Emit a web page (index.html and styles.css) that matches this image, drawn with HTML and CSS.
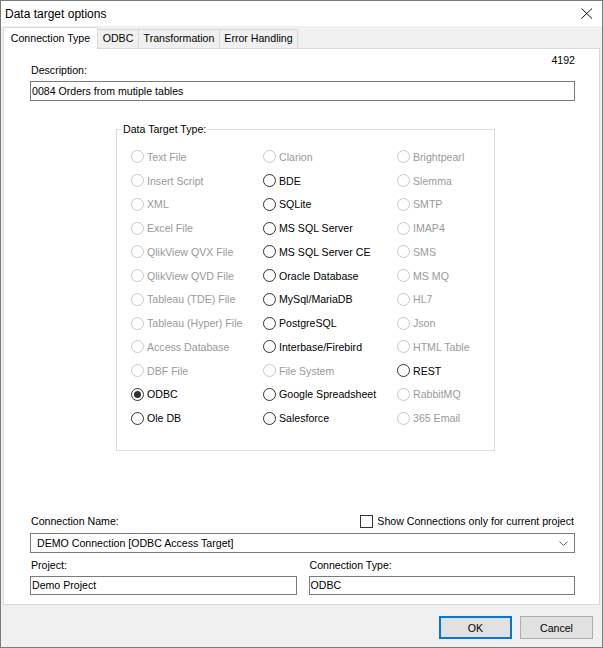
FILE: index.html
```html
<!DOCTYPE html>
<html lang="en">
  <head>
    <title>Data target options</title>
    <meta charset="utf-8">
    <link rel="stylesheet" href="styles.css">
  </head>
  <body>
    <div class="window">
      <div class="titlebar">
        <span class="title">Data target options</span>
        <svg class="close" width="12" height="11" viewBox="0 0 12 11">
          <path d="M0.5 0.5 L11 10.5 M11 0.5 L0.5 10.5" stroke="#111" stroke-width="1" fill="none"/>
        </svg>
      </div>

      <div class="tabs">
        <div class="tab active">Connection Type</div>
        <div class="tab tab-odbc">ODBC</div>
        <div class="tab tab-trans">Transformation</div>
        <div class="tab tab-err">Error Handling</div>
      </div>

      <div class="panel">
        <div class="desc-head">
          <span class="label desc-label">Description:</span>
          <span class="id-number">4192</span>
        </div>
        <div class="textbox">0084 Orders from mutiple tables</div>

        <fieldset class="group">
          <legend>Data Target Type:</legend>
          <div class="radio-grid">
            <!-- column 1 -->
            <label class="radio disabled"><span class="dot"></span>Text File</label>
            <label class="radio disabled"><span class="dot"></span>Insert Script</label>
            <label class="radio disabled"><span class="dot"></span>XML</label>
            <label class="radio disabled"><span class="dot"></span>Excel File</label>
            <label class="radio disabled"><span class="dot"></span>QlikView QVX File</label>
            <label class="radio disabled"><span class="dot"></span>QlikView QVD File</label>
            <label class="radio disabled"><span class="dot"></span>Tableau (TDE) File</label>
            <label class="radio disabled"><span class="dot"></span>Tableau (Hyper) File</label>
            <label class="radio disabled"><span class="dot"></span>Access Database</label>
            <label class="radio disabled"><span class="dot"></span>DBF File</label>
            <label class="radio checked"><span class="dot"></span>ODBC</label>
            <label class="radio"><span class="dot"></span>Ole DB</label>
            <!-- column 2 -->
            <label class="radio disabled"><span class="dot"></span>Clarion</label>
            <label class="radio"><span class="dot"></span>BDE</label>
            <label class="radio"><span class="dot"></span>SQLite</label>
            <label class="radio"><span class="dot"></span>MS SQL Server</label>
            <label class="radio"><span class="dot"></span>MS SQL Server CE</label>
            <label class="radio"><span class="dot"></span>Oracle Database</label>
            <label class="radio"><span class="dot"></span>MySql/MariaDB</label>
            <label class="radio"><span class="dot"></span>PostgreSQL</label>
            <label class="radio"><span class="dot"></span>Interbase/Firebird</label>
            <label class="radio disabled"><span class="dot"></span>File System</label>
            <label class="radio"><span class="dot"></span>Google Spreadsheet</label>
            <label class="radio"><span class="dot"></span>Salesforce</label>
            <!-- column 3 -->
            <label class="radio disabled"><span class="dot"></span>Brightpearl</label>
            <label class="radio disabled"><span class="dot"></span>Slemma</label>
            <label class="radio disabled"><span class="dot"></span>SMTP</label>
            <label class="radio disabled"><span class="dot"></span>IMAP4</label>
            <label class="radio disabled"><span class="dot"></span>SMS</label>
            <label class="radio disabled"><span class="dot"></span>MS MQ</label>
            <label class="radio disabled"><span class="dot"></span>HL7</label>
            <label class="radio disabled"><span class="dot"></span>Json</label>
            <label class="radio disabled"><span class="dot"></span>HTML Table</label>
            <label class="radio"><span class="dot"></span>REST</label>
            <label class="radio disabled"><span class="dot"></span>RabbitMQ</label>
            <label class="radio disabled"><span class="dot"></span>365 Email</label>
          </div>
        </fieldset>

        <div class="connection">
          <div class="conn-head">
            <span class="label">Connection Name:</span>
            <label class="check"><span class="box"></span>Show Connections only for current project</label>
          </div>
          <div class="combo">
            <span>DEMO Connection [ODBC Access Target]</span>
            <svg class="chevron" width="9" height="5" viewBox="0 0 9 5">
              <path d="M0.5 0.5 L4.5 4.5 L8.5 0.5" stroke="#606060" stroke-width="1" fill="none"/>
            </svg>
          </div>
          <div class="pair">
            <div class="field">
              <span class="label">Project:</span>
              <div class="textbox small">Demo Project</div>
            </div>
            <div class="field">
              <span class="label">Connection Type:</span>
              <div class="textbox small">ODBC</div>
            </div>
          </div>
        </div>
      </div>

      <div class="footer">
        <button class="btn default">OK</button>
        <button class="btn">Cancel</button>
      </div>
    </div>
  </body>
</html>
```

FILE: styles.css
```css
* {
  margin: 0;
  padding: 0;
  box-sizing: border-box;
}

body {
  font-family: "Liberation Sans", Arial, sans-serif;
  font-size: 10.6px;
  color: #000;
  background: #f0f0f0;
}

.window {
  width: 603px;
  height: 648px;
  border: 1px solid #7a7a7a;
  background: #f0f0f0;
  display: flex;
  flex-direction: column;
}

/* Title bar */
.titlebar {
  height: 25px;
  background: #fff;
  display: flex;
  align-items: center;
  justify-content: space-between;
  padding: 0 9px 0 4px;
}

.title {
  font-size: 12px;
}

/* Tabs */
.tabs {
  height: 22px;
  display: flex;
  align-items: flex-end;
  padding-left: 2px;
}

.tab {
  height: 19px;
  line-height: 17px;
  text-align: center;
  background: #f0f0f0;
  border: 1px solid #d9d9d9;
  border-bottom: none;
  margin-left: -1px;
}

.tab.active {
  height: 22px;
  width: 95px;
  line-height: 20px;
  background: #fff;
  margin-bottom: -1px;
  margin-left: 0;
  position: relative;
  z-index: 1;
}

.tab-odbc { width: 42px; }
.tab-trans { width: 82px; }
.tab-err { width: 79px; }

/* Panel */
.panel {
  flex: 1;
  margin: 0 2px;
  background: #fff;
  border: 1px solid #d9d9d9;
  display: flex;
  flex-direction: column;
  padding: 0 24px 9px 26px;
}

.desc-head {
  height: 32px;
  display: flex;
  justify-content: space-between;
}

.label {
  line-height: 13px;
}

.desc-label {
  align-self: flex-end;
  padding: 0 0 4px 1px;
}

.id-number {
  line-height: 13px;
  margin-top: 5px;
}

.textbox {
  height: 20px;
  border: 1px solid #7a7a7a;
  line-height: 18px;
  padding-left: 1px;
  background: #fff;
}

.textbox.small {
  height: 19px;
  line-height: 17px;
}

/* Group box */
.group {
  width: 379px;
  margin: 22px 0 0 86px;
  border: 1px solid #dcdcdc;
  padding: 0 0 20px 14px;
}

.group legend {
  margin-left: -9px;
  padding: 0 1px;
  line-height: 13px;
}

.radio-grid {
  margin-top: 9px;
  display: grid;
  grid-template-columns: 132px 134px auto;
  grid-template-rows: repeat(12, 23.75px);
  grid-auto-flow: column;
}

.radio {
  display: flex;
  align-items: center;
  gap: 3px;
  color: #000;
}

.radio .dot {
  width: 13px;
  height: 13px;
  border-radius: 50%;
  border: 1px solid #333;
  background: #fff;
  display: flex;
  align-items: center;
  justify-content: center;
}

.radio.checked .dot::after {
  content: '';
  width: 7px;
  height: 7px;
  border-radius: 50%;
  background: #333;
}

.radio.disabled {
  color: #999;
}

.radio.disabled .dot {
  border-color: #c8c8c8;
}

/* Connection block */
.connection {
  margin-top: auto;
}

.conn-head {
  height: 14px;
  display: flex;
  align-items: center;
  justify-content: space-between;
  padding-left: 1px;
}

.check {
  display: flex;
  align-items: center;
  gap: 4px;
  margin-right: 1px;
}

.check .box {
  width: 13px;
  height: 13px;
  border: 1px solid #333;
  background: #fff;
}

.combo {
  margin-top: 5px;
  height: 20px;
  border: 1px solid #7a7a7a;
  display: flex;
  align-items: center;
  justify-content: space-between;
  padding: 0 6px 0 6px;
}

.pair {
  margin-top: 6px;
  display: grid;
  grid-template-columns: 1fr 1fr;
  gap: 12px;
}

.field .label {
  display: block;
  padding-left: 1px;
  margin-bottom: 4px;
}

/* Footer */
.footer {
  height: 42px;
  display: flex;
  justify-content: flex-end;
  align-items: flex-start;
  gap: 8px;
  padding: 11px 9px 0 0;
}

.btn {
  width: 73px;
  height: 23px;
  font-family: "Liberation Sans", Arial, sans-serif;
  font-size: 10.6px;
  color: #000;
  background: #e1e1e1;
  border: 1px solid #adadad;
}

.btn.default {
  border-color: #0078d7;
  box-shadow: inset 0 0 0 1px #0078d7;
}
```
